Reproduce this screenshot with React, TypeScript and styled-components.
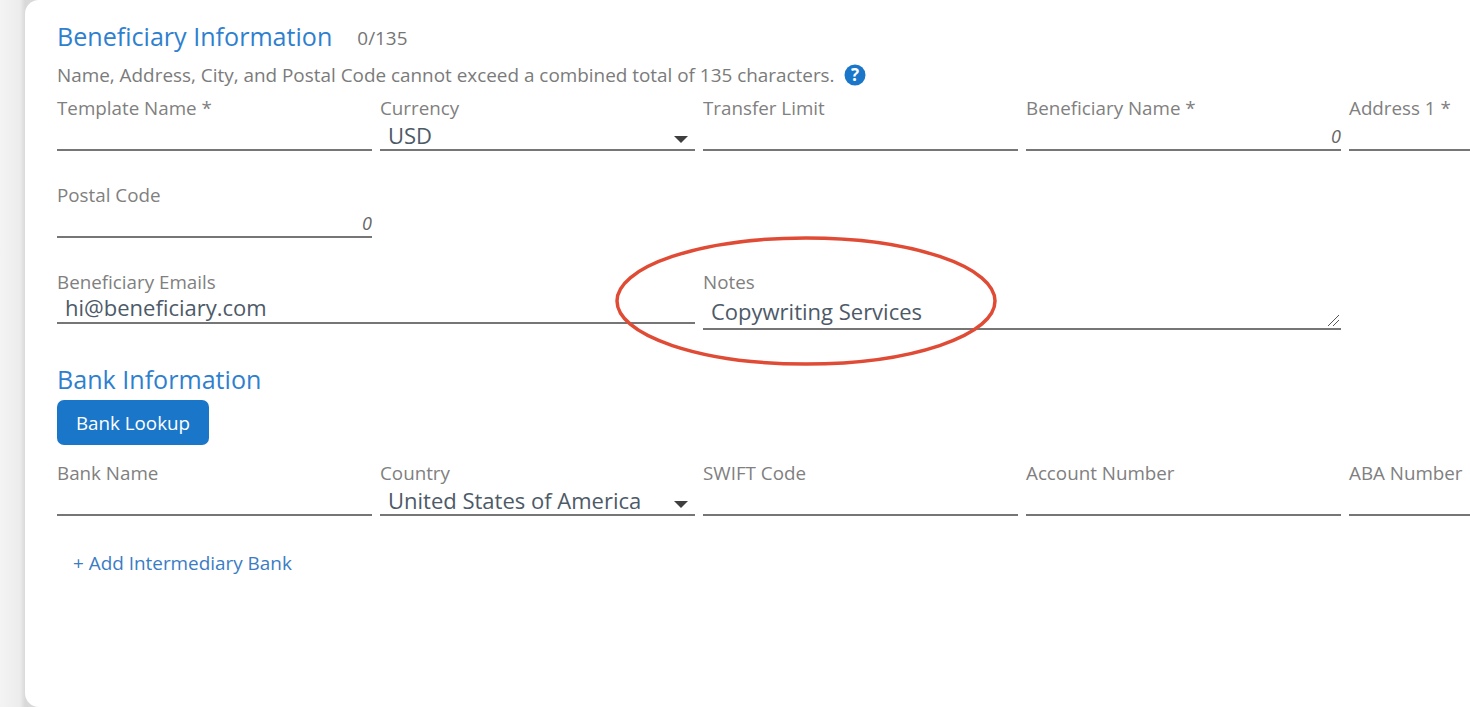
import React from 'react';
import styled, { createGlobalStyle } from 'styled-components';

const GlobalStyle = createGlobalStyle`
  html, body {
    margin: 0;
    padding: 0;
    background: #fff;
    overflow: hidden;
  }
  body {
    font-family: 'Open Sans', 'Noto Sans', sans-serif;
  }
`;

const Page = styled.div`
  width: 1470px;
  height: 707px;
  display: flex;
  padding-left: 25px;
  box-sizing: border-box;
  overflow: hidden;
  background: linear-gradient(90deg, #f4f4f4 0, #ececec 20px, #d9d9d9 25px);
`;

const Card = styled.main`
  flex: none;
  width: 1600px;
  height: 707px;
  box-sizing: border-box;
  padding: 19px 0 0 32px;
  background: #fff;
  border-radius: 14px 0 0 14px;
`;

const TitleRow = styled.div`
  display: flex;
  align-items: flex-start;
  gap: 25px;
  height: 36px;
`;

const SectionTitle = styled.h2<{ $top?: number }>`
  margin: ${p => p.$top ?? 0}px 0 0;
  font-size: 25.1px;
  font-weight: 400;
  line-height: 34px;
  color: #2f7fcf;
`;

const Counter = styled.span`
  margin-top: 2px;
  font-size: 18.9px;
  line-height: 34px;
  color: #757575;
`;

const Hint = styled.p`
  display: flex;
  align-items: center;
  gap: 9px;
  margin: 8px 0 8px;
  height: 24px;
  font-size: 18.9px;
  color: #7b7b7b;
`;

const HelpIcon = styled.svg`
  width: 22px;
  height: 22px;
  flex: none;
`;

const FieldGrid = styled.div<{ $top?: number }>`
  display: grid;
  grid-template-columns: repeat(5, 315px);
  column-gap: 8px;
  margin-top: ${p => p.$top ?? 0}px;
`;

const Field = styled.div<{ $span?: number; $height: number }>`
  position: relative;
  grid-column: span ${p => p.$span ?? 1};
  display: flex;
  flex-direction: column;
  height: ${p => p.$height}px;
  box-sizing: border-box;
  border-bottom: 2px solid #767676;
`;

const Label = styled.label`
  font-size: 18.8px;
  line-height: 26px;
  color: #808080;
`;

const Value = styled.div<{ $shift?: number }>`
  margin-top: ${p => p.$shift ?? 0}px;
  padding-left: 8px;
  font-size: 22px;
  line-height: 28px;
  color: #4d5a68;
`;

const CharCount = styled.span`
  position: absolute;
  right: 0;
  bottom: 1px;
  font-size: 18px;
  font-style: italic;
  color: #666;
`;

const Caret = styled.span`
  position: absolute;
  right: 7px;
  bottom: 6px;
  width: 0;
  height: 0;
  border-left: 7px solid transparent;
  border-right: 7px solid transparent;
  border-top: 7px solid #3f3f3f;
`;

const ResizeGrip = styled.svg`
  position: absolute;
  right: 1px;
  bottom: 1px;
  width: 14px;
  height: 14px;
`;

const Lookup = styled.button`
  display: block;
  width: 152px;
  height: 45px;
  margin-top: 4px;
  padding: 0;
  border: none;
  border-radius: 7px;
  background: #1a76c9;
  color: #fff;
  font-family: inherit;
  font-size: 18.8px;
`;

const AddLink = styled.a`
  display: block;
  margin: 35px 0 0 16px;
  font-size: 18.9px;
  line-height: 24px;
  color: #3b7cc4;
`;

const Annotation = styled.svg`
  position: absolute;
  left: 614px;
  top: 234px;
  width: 388px;
  height: 134px;
  pointer-events: none;
`;

export default function App() {
  return (
    <Page>
      <GlobalStyle />
      <Card>
        <TitleRow>
          <SectionTitle>Beneficiary Information</SectionTitle>
          <Counter>0/135</Counter>
        </TitleRow>
        <Hint>
          Name, Address, City, and Postal Code cannot exceed a combined total of 135 characters.
          <HelpIcon viewBox="0 0 22 22">
            <circle cx="11" cy="11" r="10.5" fill="#1a76c9" />
            <text x="11" y="17" textAnchor="middle" fontSize="17" fontWeight="700" fill="#fff" fontFamily="Open Sans">?</text>
          </HelpIcon>
        </Hint>
        <FieldGrid>
          <Field $height={56}><Label>Template Name *</Label></Field>
          <Field $height={56}><Label>Currency</Label><Value>USD</Value><Caret /></Field>
          <Field $height={56}><Label>Transfer Limit</Label></Field>
          <Field $height={56}><Label>Beneficiary Name *</Label><CharCount>0</CharCount></Field>
          <Field $height={56}><Label>Address 1 *</Label></Field>
        </FieldGrid>
        <FieldGrid $top={31}>
          <Field $height={56}><Label>Postal Code</Label><CharCount>0</CharCount></Field>
        </FieldGrid>
        <FieldGrid $top={31}>
          <Field $span={2} $height={55}><Label>Beneficiary Emails</Label><Value $shift={-2}>hi@beneficiary.com</Value></Field>
          <Field $span={2} $height={61}>
            <Label>Notes</Label>
            <Value $shift={2}>Copywriting Services</Value>
            <ResizeGrip viewBox="0 0 14 14">
              <path d="M2 13 L13 2 M7 13 L13 7" stroke="#555" strokeWidth="1" fill="none" />
            </ResizeGrip>
          </Field>
        </FieldGrid>
        <SectionTitle $top={32}>Bank Information</SectionTitle>
        <Lookup>Bank Lookup</Lookup>
        <FieldGrid $top={15}>
          <Field $height={56}><Label>Bank Name</Label></Field>
          <Field $height={56}><Label>Country</Label><Value>United States of America</Value><Caret /></Field>
          <Field $height={56}><Label>SWIFT Code</Label></Field>
          <Field $height={56}><Label>Account Number</Label></Field>
          <Field $height={56}><Label>ABA Number</Label></Field>
        </FieldGrid>
        <AddLink>+ Add Intermediary Bank</AddLink>
      </Card>
      <Annotation viewBox="0 0 388 134">
        <ellipse cx="192" cy="67" rx="189" ry="63" fill="none" stroke="#e04b35" strokeWidth="3.5" />
      </Annotation>
    </Page>
  );
}
